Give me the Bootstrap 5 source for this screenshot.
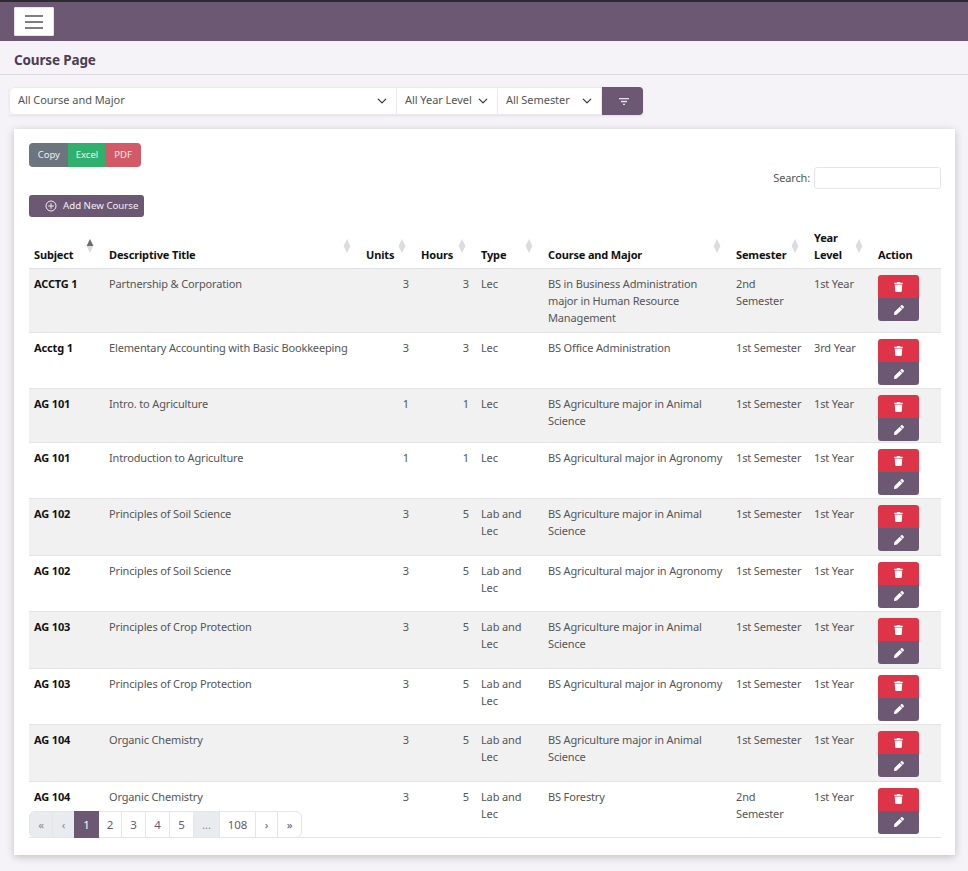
<!DOCTYPE html>
<html lang="en"><head><meta charset="utf-8"><title>Course Page</title>
<link href="https://cdn.jsdelivr.net/npm/bootstrap@5.3.0/dist/css/bootstrap.min.css" rel="stylesheet">
<style>
:root{--plum:#6c5872}
html,body{height:871px;overflow:hidden}
body{background:#f5f3f8;font-family:"Noto Sans","Open Sans",sans-serif;font-size:11px;letter-spacing:-.15px;color:#555}
.topbar{height:41px;background:var(--plum);border-top:2px solid #2c2a33;padding:5px 14px}
.menu-btn{width:40px;height:29px;background:#fff;border:1px solid #e8e6ec;border-radius:1px;padding:0;display:flex;align-items:center;justify-content:center}
.title-bar{height:34px;padding:5px 14px 0;border-bottom:1px solid #dcdae0;display:flex;align-items:center;font-size:13.5px;font-weight:700;color:#4c3d55}
.filter-row{margin:12px 0 0 9px;width:634px;height:28px;flex-wrap:nowrap;box-shadow:0 1px 2px rgba(0,0,0,.08)}
.filter-row .form-select{font-size:11px;letter-spacing:-.05px;color:#555;height:28px;min-height:28px;padding:0 8px 2px;border-color:#eceaf0;background-position:right 8px center;background-size:12px 10px;flex:none}
.fs-a{width:388px!important}.fs-b{width:102px!important}.fs-c{width:105px!important}
.filter-btn{width:42px;height:28px;background:var(--plum);border:0;border-radius:0 4px 4px 0;padding:0 0 0 3px;display:flex;align-items:center;justify-content:center}
.panel{position:relative;margin:14px 13px 0 14px;height:726px;background:#fff;border:0;border-radius:0;box-shadow:0 2px 8px rgba(0,0,0,.22);padding:14px 14px 16px 15px}
.exports{width:112px;--bs-border-radius:4px}
.exports .btn{font-size:9.5px;height:24px;padding:0;border:0;display:flex;align-items:center;justify-content:center;--bs-btn-border-radius:4px}
.b-copy{width:39px;background:#6c757d;color:#eee}.b-excel{width:38px;background:#2fb06c;color:#e8f6ee}.b-pdf{width:35px;background:#d25a66;color:#fbe9eb}
.search-row{height:22px;display:flex;justify-content:flex-end;align-items:center;gap:4px;font-size:11px}
.search-row input{width:127px;height:22px;border:1px solid #e6e6ea;border-radius:3px;padding:0 4px}
.add-btn{margin-top:6px;width:115px;height:22px;background:var(--plum);color:#f2eef4;font-size:9.7px;white-space:nowrap;border:0;border-radius:3px;padding:0 0 0 16px;display:flex;align-items:center;gap:6px}
.scroll-box{margin-top:7px;height:614px;overflow:hidden}
.course-table{table-layout:fixed;width:912px;margin:0;font-size:11px;line-height:17px;--bs-table-color:#555;--bs-table-striped-color:#555;--bs-table-striped-bg:#f1f1f2;--bs-table-border-color:#e4e4e6;--bs-table-accent-bg:transparent}
.c1{width:75px}.c2{width:257px}.c3{width:55px}.c4{width:60px}.c5{width:67px}.c6{width:188px}.c7{width:78px}.c8{width:64px}.c9{width:68px}
.course-table th{font-weight:700;color:#111;padding:5px 5px 5px;vertical-align:bottom;position:relative;border-bottom:1px solid #e0e0e2;height:39px}
.course-table td{padding:6px 5px 0;vertical-align:top}
.course-table>tbody>tr>td.sub{font-weight:700;color:#111}
.course-table td.num{text-align:right;padding-right:7px}
.sort-mark{position:absolute;right:10px;top:15px;width:8px;height:14px}
.row-actions{display:flex;flex-direction:column;width:41px}
.row-actions span{height:23px;display:flex;align-items:center;justify-content:center}
.act-del{background:#dd3447;border-radius:3px 3px 0 0}.act-edit{background:var(--plum);border-radius:0 0 3px 3px}
.h64 td{height:64px}.h56 td{height:56px}.h54 td{height:54px}.h57 td{height:56.5px}
.pager{position:absolute;left:15px;top:682px;margin:0;--bs-pagination-border-color:#e6e6ea;--bs-pagination-color:#6c5872;--bs-pagination-font-size:11.5px;--bs-pagination-padding-x:0;--bs-pagination-padding-y:0}
.pager .page-link{height:27px;display:flex;align-items:center;justify-content:center;color:#6c5872;border-color:#e6e6ea}
.pager .active .page-link{background:var(--plum);border-color:var(--plum);color:#fff}
.pager .disabled .page-link{background:#e9ecef;color:#889}
.w23{width:23px}.w24{width:24px}.w25{width:25px}.w27{width:27px}.w37{width:37px}
.icon-defs{position:absolute}
.menu-wrap{padding:5px 14px!important}
</style></head><body>
<svg width="0" height="0" class="d-block icon-defs"><defs>
<symbol id="trash" viewBox="0 0 448 512"><path fill="#fff" d="M432 32H312l-9.4-18.7A24 24 0 0 0 281.1 0H166.8a23.72 23.72 0 0 0-21.4 13.3L136 32H16A16 16 0 0 0 0 48v32a16 16 0 0 0 16 16h416a16 16 0 0 0 16-16V48a16 16 0 0 0-16-16zM53.2 467a48 48 0 0 0 47.9 45h245.8a48 48 0 0 0 47.9-45L416 128H32z"/></symbol>
<symbol id="pen" viewBox="0 0 512 512"><path fill="#fff" d="M497.9 142.1l-46.1 46.1c-4.7 4.7-12.3 4.7-17 0l-111-111c-4.7-4.7-4.7-12.3 0-17l46.1-46.1c18.7-18.7 49.1-18.7 67.9 0l60.1 60.1c18.8 18.7 18.8 49.1 0 67.9zM284.2 99.8L21.6 362.4.4 483.9c-2.9 16.4 11.4 30.6 27.8 27.8l121.5-21.3 262.6-262.6c4.7-4.7 4.7-12.3 0-17l-111-111c-4.8-4.7-12.4-4.7-17.1 0z"/></symbol>
<symbol id="both" viewBox="0 0 8 14"><path fill="#dcdcdf" d="M4 0l3.4 7L4 14 .6 7z"/></symbol>
<symbol id="asc" viewBox="0 0 8 14"><path fill="#dcdcdf" d="M4 14L.6 7h6.8z"/><path fill="#6b6b6f" d="M4 0l3.4 7H.6z"/></symbol>
</defs></svg>
<nav class="topbar navbar d-block menu-wrap"><button class="menu-btn" type="button" aria-label="Menu"><svg width="18" height="14" viewBox="0 0 18 14"><path stroke="#555" stroke-width="1.3" d="M0 1h18M0 7h18M0 13h18"/></svg></button></nav>
<div class="title-bar">Course Page</div>
<div class="input-group filter-row">
<select class="form-select fs-a"><option>All Course and Major</option></select>
<select class="form-select fs-b"><option>All Year Level</option></select>
<select class="form-select fs-c"><option>All Semester</option></select>
<button class="filter-btn" type="button" aria-label="Filter"><svg width="10" height="7" viewBox="0 0 10 7"><path stroke="#e6dfe9" stroke-width="1.3" d="M0 .7h10M2 3.5h6M4 6.3h2"/></svg></button>
</div>
<div class="card panel">
<div class="btn-group exports d-flex"><button class="btn b-copy">Copy</button><button class="btn b-excel">Excel</button><button class="btn b-pdf">PDF</button></div>
<div class="search-row"><label>Search:</label><input type="text" aria-label="Search"></div>
<button class="add-btn" type="button"><svg width="12" height="12" viewBox="0 0 12 12"><circle cx="6" cy="6" r="5" fill="none" stroke="#f2eef4"/><path stroke="#f2eef4" d="M6 3.2v5.6M3.2 6h5.6"/></svg>Add New Course</button>
<div class="scroll-box">
<table class="table table-striped course-table">
<colgroup><col class="c1"><col class="c2"><col class="c3"><col class="c4"><col class="c5"><col class="c6"><col class="c7"><col class="c8"><col class="c9"></colgroup>
<thead><tr>
<th>Subject<svg class="sort-mark"><use href="#asc"/></svg></th>
<th>Descriptive Title<svg class="sort-mark"><use href="#both"/></svg></th>
<th>Units<svg class="sort-mark"><use href="#both"/></svg></th>
<th>Hours<svg class="sort-mark"><use href="#both"/></svg></th>
<th>Type<svg class="sort-mark"><use href="#both"/></svg></th>
<th>Course and Major<svg class="sort-mark"><use href="#both"/></svg></th>
<th>Semester<svg class="sort-mark"><use href="#both"/></svg></th>
<th>Year Level<svg class="sort-mark"><use href="#both"/></svg></th>
<th>Action</th>
</tr></thead>
<tbody id="rows">
<tr class="h64"><td class="sub">ACCTG 1</td><td>Partnership &amp; Corporation</td><td class="num">3</td><td class="num">3</td><td>Lec</td><td>BS in Business Administration major in Human Resource Management</td><td>2nd Semester</td><td>1st Year</td><td><div class="row-actions"><span class="act-del"><svg width="9" height="10"><use href="#trash"/></svg></span><span class="act-edit"><svg width="10" height="10"><use href="#pen"/></svg></span></div></td></tr>
<tr class="h56"><td class="sub">Acctg 1</td><td>Elementary Accounting with Basic Bookkeeping</td><td class="num">3</td><td class="num">3</td><td>Lec</td><td>BS Office Administration</td><td>1st Semester</td><td>3rd Year</td><td><div class="row-actions"><span class="act-del"><svg width="9" height="10"><use href="#trash"/></svg></span><span class="act-edit"><svg width="10" height="10"><use href="#pen"/></svg></span></div></td></tr>
<tr class="h54"><td class="sub">AG 101</td><td>Intro. to Agriculture</td><td class="num">1</td><td class="num">1</td><td>Lec</td><td>BS Agriculture major in Animal Science</td><td>1st Semester</td><td>1st Year</td><td><div class="row-actions"><span class="act-del"><svg width="9" height="10"><use href="#trash"/></svg></span><span class="act-edit"><svg width="10" height="10"><use href="#pen"/></svg></span></div></td></tr>
<tr class="h56"><td class="sub">AG 101</td><td>Introduction to Agriculture</td><td class="num">1</td><td class="num">1</td><td>Lec</td><td>BS Agricultural major in Agronomy</td><td>1st Semester</td><td>1st Year</td><td><div class="row-actions"><span class="act-del"><svg width="9" height="10"><use href="#trash"/></svg></span><span class="act-edit"><svg width="10" height="10"><use href="#pen"/></svg></span></div></td></tr>
<tr class="h57"><td class="sub">AG 102</td><td>Principles of Soil Science</td><td class="num">3</td><td class="num">5</td><td>Lab and Lec</td><td>BS Agriculture major in Animal Science</td><td>1st Semester</td><td>1st Year</td><td><div class="row-actions"><span class="act-del"><svg width="9" height="10"><use href="#trash"/></svg></span><span class="act-edit"><svg width="10" height="10"><use href="#pen"/></svg></span></div></td></tr>
<tr class="h57"><td class="sub">AG 102</td><td>Principles of Soil Science</td><td class="num">3</td><td class="num">5</td><td>Lab and Lec</td><td>BS Agricultural major in Agronomy</td><td>1st Semester</td><td>1st Year</td><td><div class="row-actions"><span class="act-del"><svg width="9" height="10"><use href="#trash"/></svg></span><span class="act-edit"><svg width="10" height="10"><use href="#pen"/></svg></span></div></td></tr>
<tr class="h57"><td class="sub">AG 103</td><td>Principles of Crop Protection</td><td class="num">3</td><td class="num">5</td><td>Lab and Lec</td><td>BS Agriculture major in Animal Science</td><td>1st Semester</td><td>1st Year</td><td><div class="row-actions"><span class="act-del"><svg width="9" height="10"><use href="#trash"/></svg></span><span class="act-edit"><svg width="10" height="10"><use href="#pen"/></svg></span></div></td></tr>
<tr class="h57"><td class="sub">AG 103</td><td>Principles of Crop Protection</td><td class="num">3</td><td class="num">5</td><td>Lab and Lec</td><td>BS Agricultural major in Agronomy</td><td>1st Semester</td><td>1st Year</td><td><div class="row-actions"><span class="act-del"><svg width="9" height="10"><use href="#trash"/></svg></span><span class="act-edit"><svg width="10" height="10"><use href="#pen"/></svg></span></div></td></tr>
<tr class="h57"><td class="sub">AG 104</td><td>Organic Chemistry</td><td class="num">3</td><td class="num">5</td><td>Lab and Lec</td><td>BS Agriculture major in Animal Science</td><td>1st Semester</td><td>1st Year</td><td><div class="row-actions"><span class="act-del"><svg width="9" height="10"><use href="#trash"/></svg></span><span class="act-edit"><svg width="10" height="10"><use href="#pen"/></svg></span></div></td></tr>
<tr class="h57"><td class="sub">AG 104</td><td>Organic Chemistry</td><td class="num">3</td><td class="num">5</td><td>Lab and Lec</td><td>BS Forestry</td><td>2nd Semester</td><td>1st Year</td><td><div class="row-actions"><span class="act-del"><svg width="9" height="10"><use href="#trash"/></svg></span><span class="act-edit"><svg width="10" height="10"><use href="#pen"/></svg></span></div></td></tr>
</tbody></table>
</div>
<ul class="pagination pager">
<li class="page-item disabled"><a class="page-link w24" href="#">«</a></li>
<li class="page-item disabled"><a class="page-link w23" href="#">‹</a></li>
<li class="page-item active"><a class="page-link w25" href="#">1</a></li>
<li class="page-item"><a class="page-link w24" href="#">2</a></li>
<li class="page-item"><a class="page-link w25" href="#">3</a></li>
<li class="page-item"><a class="page-link w25" href="#">4</a></li>
<li class="page-item"><a class="page-link w25" href="#">5</a></li>
<li class="page-item disabled"><a class="page-link w27" href="#">…</a></li>
<li class="page-item"><a class="page-link w37" href="#">108</a></li>
<li class="page-item"><a class="page-link w23" href="#">›</a></li>
<li class="page-item"><a class="page-link w25" href="#">»</a></li>
</ul>
</div>
<script src="https://cdn.jsdelivr.net/npm/bootstrap@5.3.0/dist/js/bootstrap.bundle.min.js"></script>
</body></html>
